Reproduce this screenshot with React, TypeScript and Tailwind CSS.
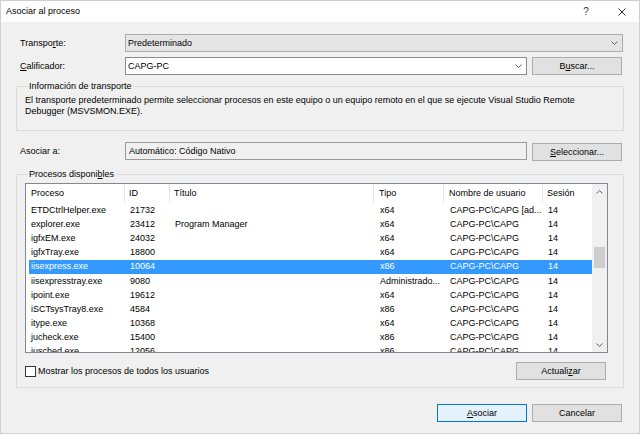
import React from "react";

const Chevron = ({ up = false }: { up?: boolean }) => (
  <svg width="7" height="4" viewBox="0 0 7 4" className="block">
    <path
      d={up ? "M0.5 3.5 L3.5 0.5 L6.5 3.5" : "M0.5 0.5 L3.5 3.5 L6.5 0.5"}
      fill="none"
      stroke="#606060"
      strokeWidth="1"
    />
  </svg>
);

const rows: string[][] = [
  ["ETDCtrlHelper.exe", "21732", "", "x64", "CAPG-PC\\CAPG [ad...", "14"],
  ["explorer.exe", "23412", "Program Manager", "x64", "CAPG-PC\\CAPG", "14"],
  ["igfxEM.exe", "24032", "", "x64", "CAPG-PC\\CAPG", "14"],
  ["igfxTray.exe", "18800", "", "x64", "CAPG-PC\\CAPG", "14"],
  ["iisexpress.exe", "10064", "", "x86", "CAPG-PC\\CAPG", "14"],
  ["iisexpresstray.exe", "9080", "", "Administrado...", "CAPG-PC\\CAPG", "14"],
  ["ipoint.exe", "19612", "", "x64", "CAPG-PC\\CAPG", "14"],
  ["iSCTsysTray8.exe", "4584", "", "x86", "CAPG-PC\\CAPG", "14"],
  ["itype.exe", "10368", "", "x64", "CAPG-PC\\CAPG", "14"],
  ["jucheck.exe", "15400", "", "x86", "CAPG-PC\\CAPG", "14"],
  ["jusched.exe", "12056", "", "x86", "CAPG-PC\\CAPG", "14"],
];

function Button({ children, primary = false }: { children: React.ReactNode; primary?: boolean }) {
  return (
    <div
      className={
        primary
          ? "w-[90px] h-[18px] shrink-0 flex items-center justify-center bg-[#e5f1fb] border border-[#0078d7]"
          : "w-[90px] h-[18px] shrink-0 flex items-center justify-center bg-[#e1e1e1] border border-[#adadad]"
      }
    >
      {children}
    </div>
  );
}

export default function App() {
  return (
    <div className="w-[640px] h-[434px] overflow-hidden bg-[#f0f0f0] border border-[#cfcfcf] flex flex-col text-[9px] leading-[11px] text-black font-['Liberation_Sans',Arial,sans-serif]">
      {/* Title bar */}
      <div className="h-[21px] bg-white flex items-center shrink-0">
        <span className="pl-[5px]">Asociar al proceso</span>
        <span className="ml-auto w-[36px] text-center text-[10px] text-[#333333]">?</span>
        <span className="w-[35px] flex justify-center">
          <svg width="8" height="8" viewBox="0 0 8 8">
            <path d="M0.5 0.5 L7.5 7.5 M7.5 0.5 L0.5 7.5" stroke="#111" strokeWidth="0.9" />
          </svg>
        </span>
      </div>

      {/* Body */}
      <div className="flex-1 px-[15px] pt-[12px] flex flex-col">
        {/* Transporte */}
        <div className="flex items-center h-[18px] pl-[4px] pr-[1px]">
          <div className="w-[105px] shrink-0">
            Transpo<span className="underline">r</span>te:
          </div>
          <div className="flex-1 h-full bg-[#e5e5e5] border border-[#acacac] flex items-center pl-[2px] pr-[4px]">
            <span>Predeterminado</span>
            <span className="ml-auto">
              <Chevron />
            </span>
          </div>
        </div>

        {/* Calificador */}
        <div className="flex items-center h-[18px] mt-[5px] pl-[4px] pr-[2px]">
          <div className="w-[105px] shrink-0">
            <span className="underline">C</span>alificador:
          </div>
          <div className="w-[402px] h-full bg-white border border-[#8a8a8a] flex items-center pl-[2px] pr-[4px]">
            <span>CAPG-PC</span>
            <span className="ml-auto">
              <Chevron />
            </span>
          </div>
          <div className="ml-[5px]">
            <Button>
              B<span className="underline">u</span>scar...
            </Button>
          </div>
        </div>

        {/* Información de transporte */}
        <fieldset className="mt-[5px] border border-[#dcdcdc] pl-[8px] pr-[8px] pt-[3px] pb-[13px]">
          <legend className="ml-[3px] px-[1px] leading-[12px]">Información de transporte</legend>
          <div className="leading-[11px]">
            El transporte predeterminado permite seleccionar procesos en este equipo o un equipo remoto en el que se ejecute Visual Studio Remote
            <br />
            Debugger (MSVSMON.EXE).
          </div>
        </fieldset>

        {/* Asociar a */}
        <div className="flex items-center h-[18px] mt-[11px] pl-[4px] pr-[2px]">
          <div className="w-[105px] shrink-0">Asociar a:</div>
          <div className="w-[402px] h-full bg-[#f0f0f0] border border-[#9a9a9a] flex items-center pl-[3px]">
            Automático: Código Nativo
          </div>
          <div className="ml-[5px] mt-[2px]">
            <Button>
              <span className="underline">S</span>eleccionar...
            </Button>
          </div>
        </div>

        {/* Procesos disponibles */}
        <fieldset className="mt-[8px] border border-[#dcdcdc] pl-[8px] pr-[15px] pt-[3px] pb-[7px]">
          <legend className="ml-[3px] px-[1px] leading-[12px]">
            Procesos disponi<span className="underline">b</span>les
          </legend>

          {/* List */}
          <div className="h-[170px] border border-[#828790] bg-white flex">
            <div className="flex-1 flex flex-col overflow-hidden">
              {/* Header */}
              <div className="h-[19px] shrink-0 flex items-center">
                <div className="w-[99px] h-full pl-[5px] flex items-center border-r border-[#e5e5e5]">Proceso</div>
                <div className="w-[45px] h-full pl-[4px] flex items-center border-r border-[#e5e5e5]">ID</div>
                <div className="w-[204px] h-full pl-[4px] flex items-center border-r border-[#e5e5e5]">Título</div>
                <div className="w-[70px] h-full pl-[5px] flex items-center border-r border-[#e5e5e5]">Tipo</div>
                <div className="w-[99px] h-full pl-[5px] flex items-center border-r border-[#e5e5e5]">Nombre de usuario</div>
                <div className="flex-1 h-full pl-[4px] flex items-center">Sesión</div>
              </div>
              {/* Rows */}
              <div className="flex-1 overflow-hidden pl-[3px]">
                {rows.map((r, i) => {
                  const sel = i === 4;
                  return (
                    <div
                      key={i}
                      className={
                        sel
                          ? "h-[14.2px] flex items-center whitespace-nowrap bg-[#3399ff] text-white"
                          : "h-[14.2px] flex items-center whitespace-nowrap"
                      }
                    >
                      <div className="w-[96px] pl-[2px]">{r[0]}</div>
                      <div className="w-[45px] pl-[5px]">{r[1]}</div>
                      <div className="w-[204px] pl-[5px]">{r[2]}</div>
                      <div className="w-[70px] pl-[6px]">{r[3]}</div>
                      <div className="w-[99px] pl-[6px]">{r[4]}</div>
                      <div className="flex-1 pl-[5px]">{r[5]}</div>
                    </div>
                  );
                })}
              </div>
            </div>
            {/* Scrollbar */}
            <div className="w-[15px] shrink-0 bg-[#f0f0f0] flex flex-col">
              <div className="h-[15px] flex items-center justify-center">
                <Chevron up />
              </div>
              <div className="flex-1 flex flex-col">
                <div className="h-[48px]" />
                <div className="h-[21px] mx-[2px] bg-[#cdcdcd]" />
              </div>
              <div className="h-[15px] flex items-center justify-center">
                <Chevron />
              </div>
            </div>
          </div>

          {/* Checkbox row */}
          <div className="flex items-center h-[18px] mt-[9px]">
            <div className="w-[11px] h-[11px] bg-white border border-[#333333] shrink-0" />
            <span className="ml-[2px]">Mostrar los procesos de todos los usuarios</span>
            <div className="ml-auto mr-[2px]">
              <Button>
                Actuali<span className="underline">z</span>ar
              </Button>
            </div>
          </div>
        </fieldset>

        {/* Bottom buttons */}
        <div className="flex justify-end mt-[16px] pr-[2px] gap-[5px]">
          <Button primary>
            <span className="underline">A</span>sociar
          </Button>
          <Button>Cancelar</Button>
        </div>
      </div>
    </div>
  );
}
